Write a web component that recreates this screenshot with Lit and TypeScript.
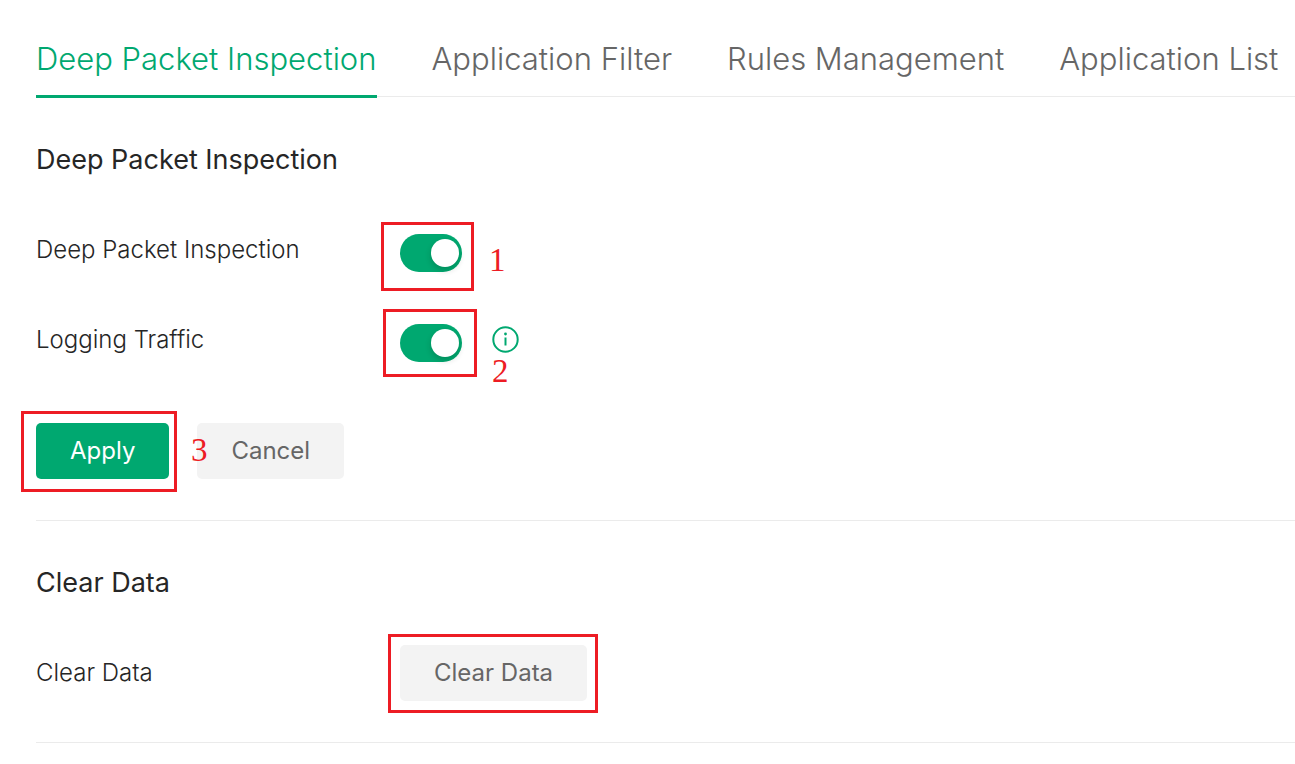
import { LitElement, html, css } from "lit";
import { customElement, state } from "lit/decorators.js";

const TABS = [
  "Deep Packet Inspection",
  "Application Filter",
  "Rules Management",
  "Application List",
];

@customElement("app-root")
export class AppRoot extends LitElement {
  static styles = css`
    :host {
      display: block;
      padding-left: 36px;
      background: #fff;
      color: #262626;
      font: 300 24px/32px Inter, "Liberation Sans", sans-serif;
    }
    .tabs {
      display: flex;
      gap: 55px;
      padding-top: 39px;
      margin-bottom: 1px;
      border-bottom: 1px solid #ebebeb;
      white-space: nowrap;
    }
    .tab {
      margin-bottom: -2px;
      padding-bottom: 16px;
      border-bottom: 3px solid transparent;
      color: #666;
      font-size: 31px;
      line-height: 40px;
      text-decoration: none;
    }
    .tab.active {
      color: #00a870;
      border-color: #00a870;
    }
    .section {
      padding: 42px 0 41px;
      border-bottom: 1px solid #ebebeb;
    }
    .title {
      margin: 0 0 42px;
      font-size: 27px;
      font-weight: 400;
      line-height: 40px;
    }
    .row {
      display: grid;
      grid-template-columns: 364px 1fr;
      align-items: center;
      min-height: 56px;
      margin-bottom: 34px;
    }
    .row:last-child {
      margin-bottom: 0;
    }
    .control {
      display: flex;
      align-items: center;
      gap: 30px;
    }
    .actions {
      display: flex;
      gap: 28px;
      margin-top: 55px;
    }
    .marked {
      position: relative;
      display: flex;
    }
    .switch {
      appearance: none;
      box-sizing: border-box;
      width: 62px;
      height: 38px;
      margin: 6px 0 0;
      padding: 5px 3px;
      border-radius: 19px;
      background: #bfbfbf;
      cursor: pointer;
    }
    .switch::before {
      content: "";
      display: block;
      width: 28px;
      height: 28px;
      border-radius: 50%;
      background: #fff;
      box-shadow: 0 3px 6px rgba(0, 35, 11, 0.2);
    }
    .switch:checked {
      background: #00a870;
    }
    .switch:checked::before {
      margin-left: auto;
    }
    .info {
      display: flex;
      margin: 0 0 2px;
      padding: 0;
      border: 0;
      background: none;
      color: #00a870;
    }
    .btn {
      height: 56px;
      padding: 0 34px;
      border: 0;
      border-radius: 5px;
      background: #f3f3f3;
      color: #666;
      font: inherit;
      font-weight: 400;
      white-space: nowrap;
      cursor: pointer;
    }
    .btn.primary {
      background: #00a870;
      color: #fff;
    }
    .frame {
      position: absolute;
      border: 3px solid #ed1c24;
      pointer-events: none;
    }
    .frame-first {
      inset: -6px -12px -19px -19px;
    }
    .frame-second {
      inset: -9px -15px -15px -17px;
    }
    .frame-apply {
      inset: -12px -8px -13px -15px;
    }
    .frame-clear {
      inset: -11px -11px -12px -12px;
    }
    .step {
      position: absolute;
      color: #ed1c24;
      font: 400 33px/36px "Liberation Serif", serif;
      pointer-events: none;
    }
    .step-first {
      left: 89px;
      top: 14px;
    }
    .step-second {
      left: 92px;
      top: 35px;
    }
    .step-apply {
      left: 155px;
      top: 9px;
    }
  `;

  @state() private active = 0;

  private select(event: Event, index: number) {
    event.preventDefault();
    this.active = index;
  }

  render() {
    return html`
      <nav class="tabs">
        ${TABS.map(
          (name, i) => html`<a
            href="#"
            class="tab ${i === this.active ? "active" : ""}"
            @click=${(e: Event) => this.select(e, i)}
            >${name}</a
          >`
        )}
      </nav>
      <main>
        <section class="section">
          <h2 class="title">Deep Packet Inspection</h2>
          <div class="row">
            <label for="dpi">Deep Packet Inspection</label>
            <div class="control">
              <div class="marked">
                <input id="dpi" class="switch" type="checkbox" role="switch" checked />
                <span class="frame frame-first"></span>
                <span class="step step-first">1</span>
              </div>
            </div>
          </div>
          <div class="row">
            <label for="logging">Logging Traffic</label>
            <div class="control">
              <div class="marked">
                <input id="logging" class="switch" type="checkbox" role="switch" checked />
                <span class="frame frame-second"></span>
                <span class="step step-second">2</span>
              </div>
              <button class="info" aria-label="About logging traffic">
                <svg width="27" height="27" viewBox="0 0 27 27" fill="none">
                  <circle cx="13.5" cy="13.5" r="12.2" stroke="currentColor" stroke-width="2" />
                  <path d="M13.5 11.5v8" stroke="currentColor" stroke-width="2" />
                  <circle cx="13.5" cy="8" r="1.4" fill="currentColor" />
                </svg>
              </button>
            </div>
          </div>
          <div class="actions">
            <div class="marked">
              <button class="btn primary">Apply</button>
              <span class="frame frame-apply"></span>
              <span class="step step-apply">3</span>
            </div>
            <button class="btn">Cancel</button>
          </div>
        </section>
        <section class="section">
          <h2 class="title">Clear Data</h2>
          <div class="row">
            <span id="clear-label">Clear Data</span>
            <div class="control">
              <div class="marked">
                <button class="btn" aria-describedby="clear-label">Clear Data</button>
                <span class="frame frame-clear"></span>
              </div>
            </div>
          </div>
        </section>
      </main>
    `;
  }
}
